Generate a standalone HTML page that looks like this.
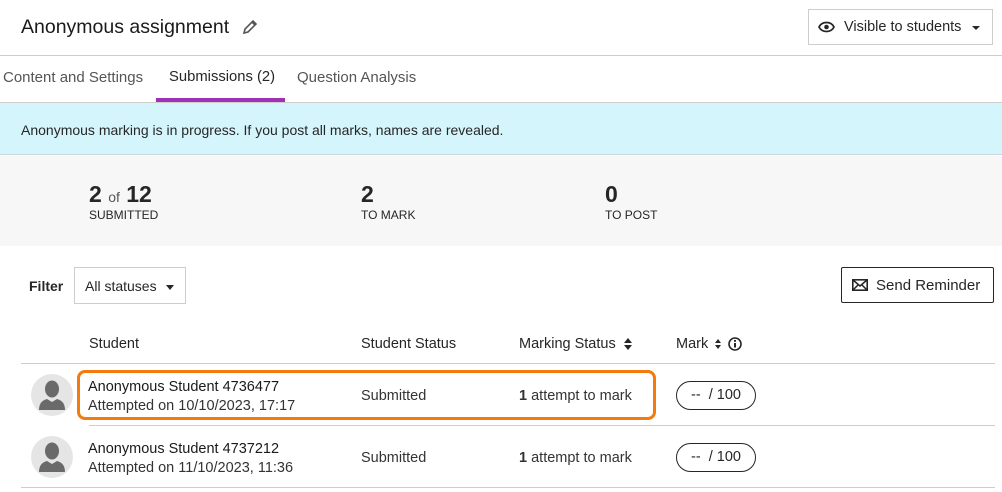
<!DOCTYPE html>
<html><head><style>
*{margin:0;padding:0;box-sizing:border-box}
body{width:1002px;height:492px;background:#fff;font-family:"Liberation Sans",sans-serif;color:#262626;position:relative;overflow:hidden}
.a{position:absolute;white-space:nowrap}
.line{position:absolute;height:1px;background:#cdcdcd}
.av{position:absolute;width:42px;height:42px;border-radius:50%;background:#e5e5e5;overflow:hidden}
.pill{position:absolute;width:80px;height:29px;border:1px solid #262626;border-radius:15px;font-size:14.5px;text-align:center;line-height:27px}
</style></head><body>
<div class="a" style="left:21px;top:16px;font-size:19.5px;color:#1a1a1a">Anonymous assignment</div>
<svg class="a" style="left:241px;top:18px" width="18" height="18" viewBox="0 0 18 18"><path d="M3 15l1-4 8-8 3 3-8 8z M11 4l3 3" fill="none" stroke="#555" stroke-width="1.6"/></svg>
<div class="a" style="left:808px;top:9px;width:185px;height:36px;border:1px solid #cdcdcd"></div>
<svg class="a" style="left:818px;top:20px" width="17" height="14" viewBox="0 0 17 14"><path d="M1 7C4 1 13 1 16 7C13 13 4 13 1 7z" fill="none" stroke="#262626" stroke-width="1.7"/><circle cx="8.5" cy="7" r="2.3" fill="#262626"/></svg>
<div class="a" style="left:844px;top:19px;font-size:14.5px;color:#262626">Visible to students</div>
<div class="a" style="left:972px;top:26px;border:4px solid transparent;border-top:4px solid #262626;border-bottom:0"></div>
<div class="line" style="left:0;top:55px;width:1002px"></div>
<div class="a" style="left:3px;top:69px;font-size:15px;color:#555">Content and Settings</div>
<div class="a" style="left:169px;top:69px;font-size:14.8px;color:#262626">Submissions (2)</div>
<div class="a" style="left:297px;top:69px;font-size:15px;color:#555">Question Analysis</div>
<div class="a" style="left:156px;top:98px;width:129px;height:4px;background:#a030b8"></div>
<div class="line" style="left:0;top:102px;width:1002px"></div>
<div class="a" style="left:0;top:103px;width:1002px;height:52px;background:#d5f5fd;border-bottom:1px solid #c8d8dc"></div>
<div class="a" style="left:21px;top:122px;font-size:14px;color:#262626">Anonymous marking is in progress. If you post all marks, names are revealed.</div>
<div class="a" style="left:0;top:156px;width:1002px;height:90px;background:#f7f7f7"></div>
<div class="a" style="left:89px;top:181px;font-size:23px;font-weight:bold;color:#262626">2 <span style="font-size:14px;font-weight:normal;color:#555">of</span> 12</div>
<div class="a" style="left:89px;top:208px;font-size:12px">SUBMITTED</div>
<div class="a" style="left:361px;top:181px;font-size:23px;font-weight:bold">2</div>
<div class="a" style="left:361px;top:208px;font-size:12px">TO MARK</div>
<div class="a" style="left:605px;top:181px;font-size:23px;font-weight:bold">0</div>
<div class="a" style="left:605px;top:208px;font-size:12px">TO POST</div>
<div class="a" style="left:29px;top:278px;font-size:14px;font-weight:bold">Filter</div>
<div class="a" style="left:74px;top:267px;width:112px;height:37px;border:1px solid #cdcdcd"></div>
<div class="a" style="left:85px;top:278px;font-size:14px">All statuses</div>
<div class="a" style="left:166px;top:285px;border:4px solid transparent;border-top:5px solid #262626;border-bottom:0"></div>
<div class="a" style="left:841px;top:267px;width:153px;height:36px;border:1px solid #262626;border-radius:2px"></div>
<svg class="a" style="left:852px;top:279px" width="16" height="12" viewBox="0 0 16 12"><rect x="0.8" y="0.8" width="14.4" height="10.4" fill="none" stroke="#262626" stroke-width="1.6"/><path d="M1 1l7 6 7-6M1 11l5-5M15 11l-5-5" fill="none" stroke="#262626" stroke-width="1.5"/></svg>
<div class="a" style="left:876px;top:277px;font-size:15px">Send Reminder</div>
<div class="a" style="left:89px;top:336px;font-size:14.5px">Student</div>
<div class="a" style="left:361px;top:336px;font-size:14.5px">Student Status</div>
<div class="a" style="left:519px;top:336px;font-size:14.5px">Marking Status</div>
<div class="a" style="left:676px;top:336px;font-size:14.5px">Mark</div>
<svg class="a" style="left:714px;top:337px" width="30" height="14" viewBox="0 0 30 14"><path d="M1 6l3-4 3 4zM1 8l3 4 3-4z" fill="#262626"/><circle cx="21" cy="7" r="6" fill="none" stroke="#262626" stroke-width="1.6"/><rect x="20" y="6" width="2" height="4.5" fill="#262626"/><rect x="20" y="3" width="2" height="1.8" fill="#262626"/></svg>
<svg class="a" style="left:624px;top:338px" width="8" height="12" viewBox="0 0 8 12"><path d="M0 5l4-5 4 5zM0 7l4 5 4-5z" fill="#262626"/></svg>
<div class="line" style="left:21px;top:363px;width:974px"></div>
<div class="av" style="left:31px;top:374px"><svg width="42" height="42" viewBox="0 0 42 42"><ellipse cx="21" cy="15" rx="7" ry="8.5" fill="#6a6a6a"/><path d="M8 36q0-9 8-11l5 3 5-3q8 2 8 11z" fill="#6a6a6a"/></svg></div>
<div class="a" style="left:88px;top:379px;font-size:14.5px;color:#1a1a1a">Anonymous Student 4736477</div>
<div class="a" style="left:88px;top:398px;font-size:14.5px;color:#333">Attempted on 10/10/2023, 17:17</div>
<div class="a" style="left:361px;top:388px;font-size:14.5px;color:#333">Submitted</div>
<div class="a" style="left:519px;top:388px;font-size:14.5px;color:#333"><b>1</b> attempt to mark</div>
<div class="a" style="left:77px;top:370px;width:579px;height:50px;border:3px solid #f47a0e;border-radius:8px"></div>
<div class="pill" style="left:676px;top:381px">--&nbsp; / 100</div>
<div class="line" style="left:89px;top:425px;width:906px"></div>
<div class="av" style="left:31px;top:436px"><svg width="42" height="42" viewBox="0 0 42 42"><ellipse cx="21" cy="15" rx="7" ry="8.5" fill="#6a6a6a"/><path d="M8 36q0-9 8-11l5 3 5-3q8 2 8 11z" fill="#6a6a6a"/></svg></div>
<div class="a" style="left:88px;top:441px;font-size:14.5px;color:#1a1a1a">Anonymous Student 4737212</div>
<div class="a" style="left:88px;top:460px;font-size:14.5px;color:#333">Attempted on 11/10/2023, 11:36</div>
<div class="a" style="left:361px;top:450px;font-size:14.5px;color:#333">Submitted</div>
<div class="a" style="left:519px;top:450px;font-size:14.5px;color:#333"><b>1</b> attempt to mark</div>
<div class="pill" style="left:676px;top:443px">--&nbsp; / 100</div>
<div class="line" style="left:21px;top:487px;width:974px"></div>
</body></html>
